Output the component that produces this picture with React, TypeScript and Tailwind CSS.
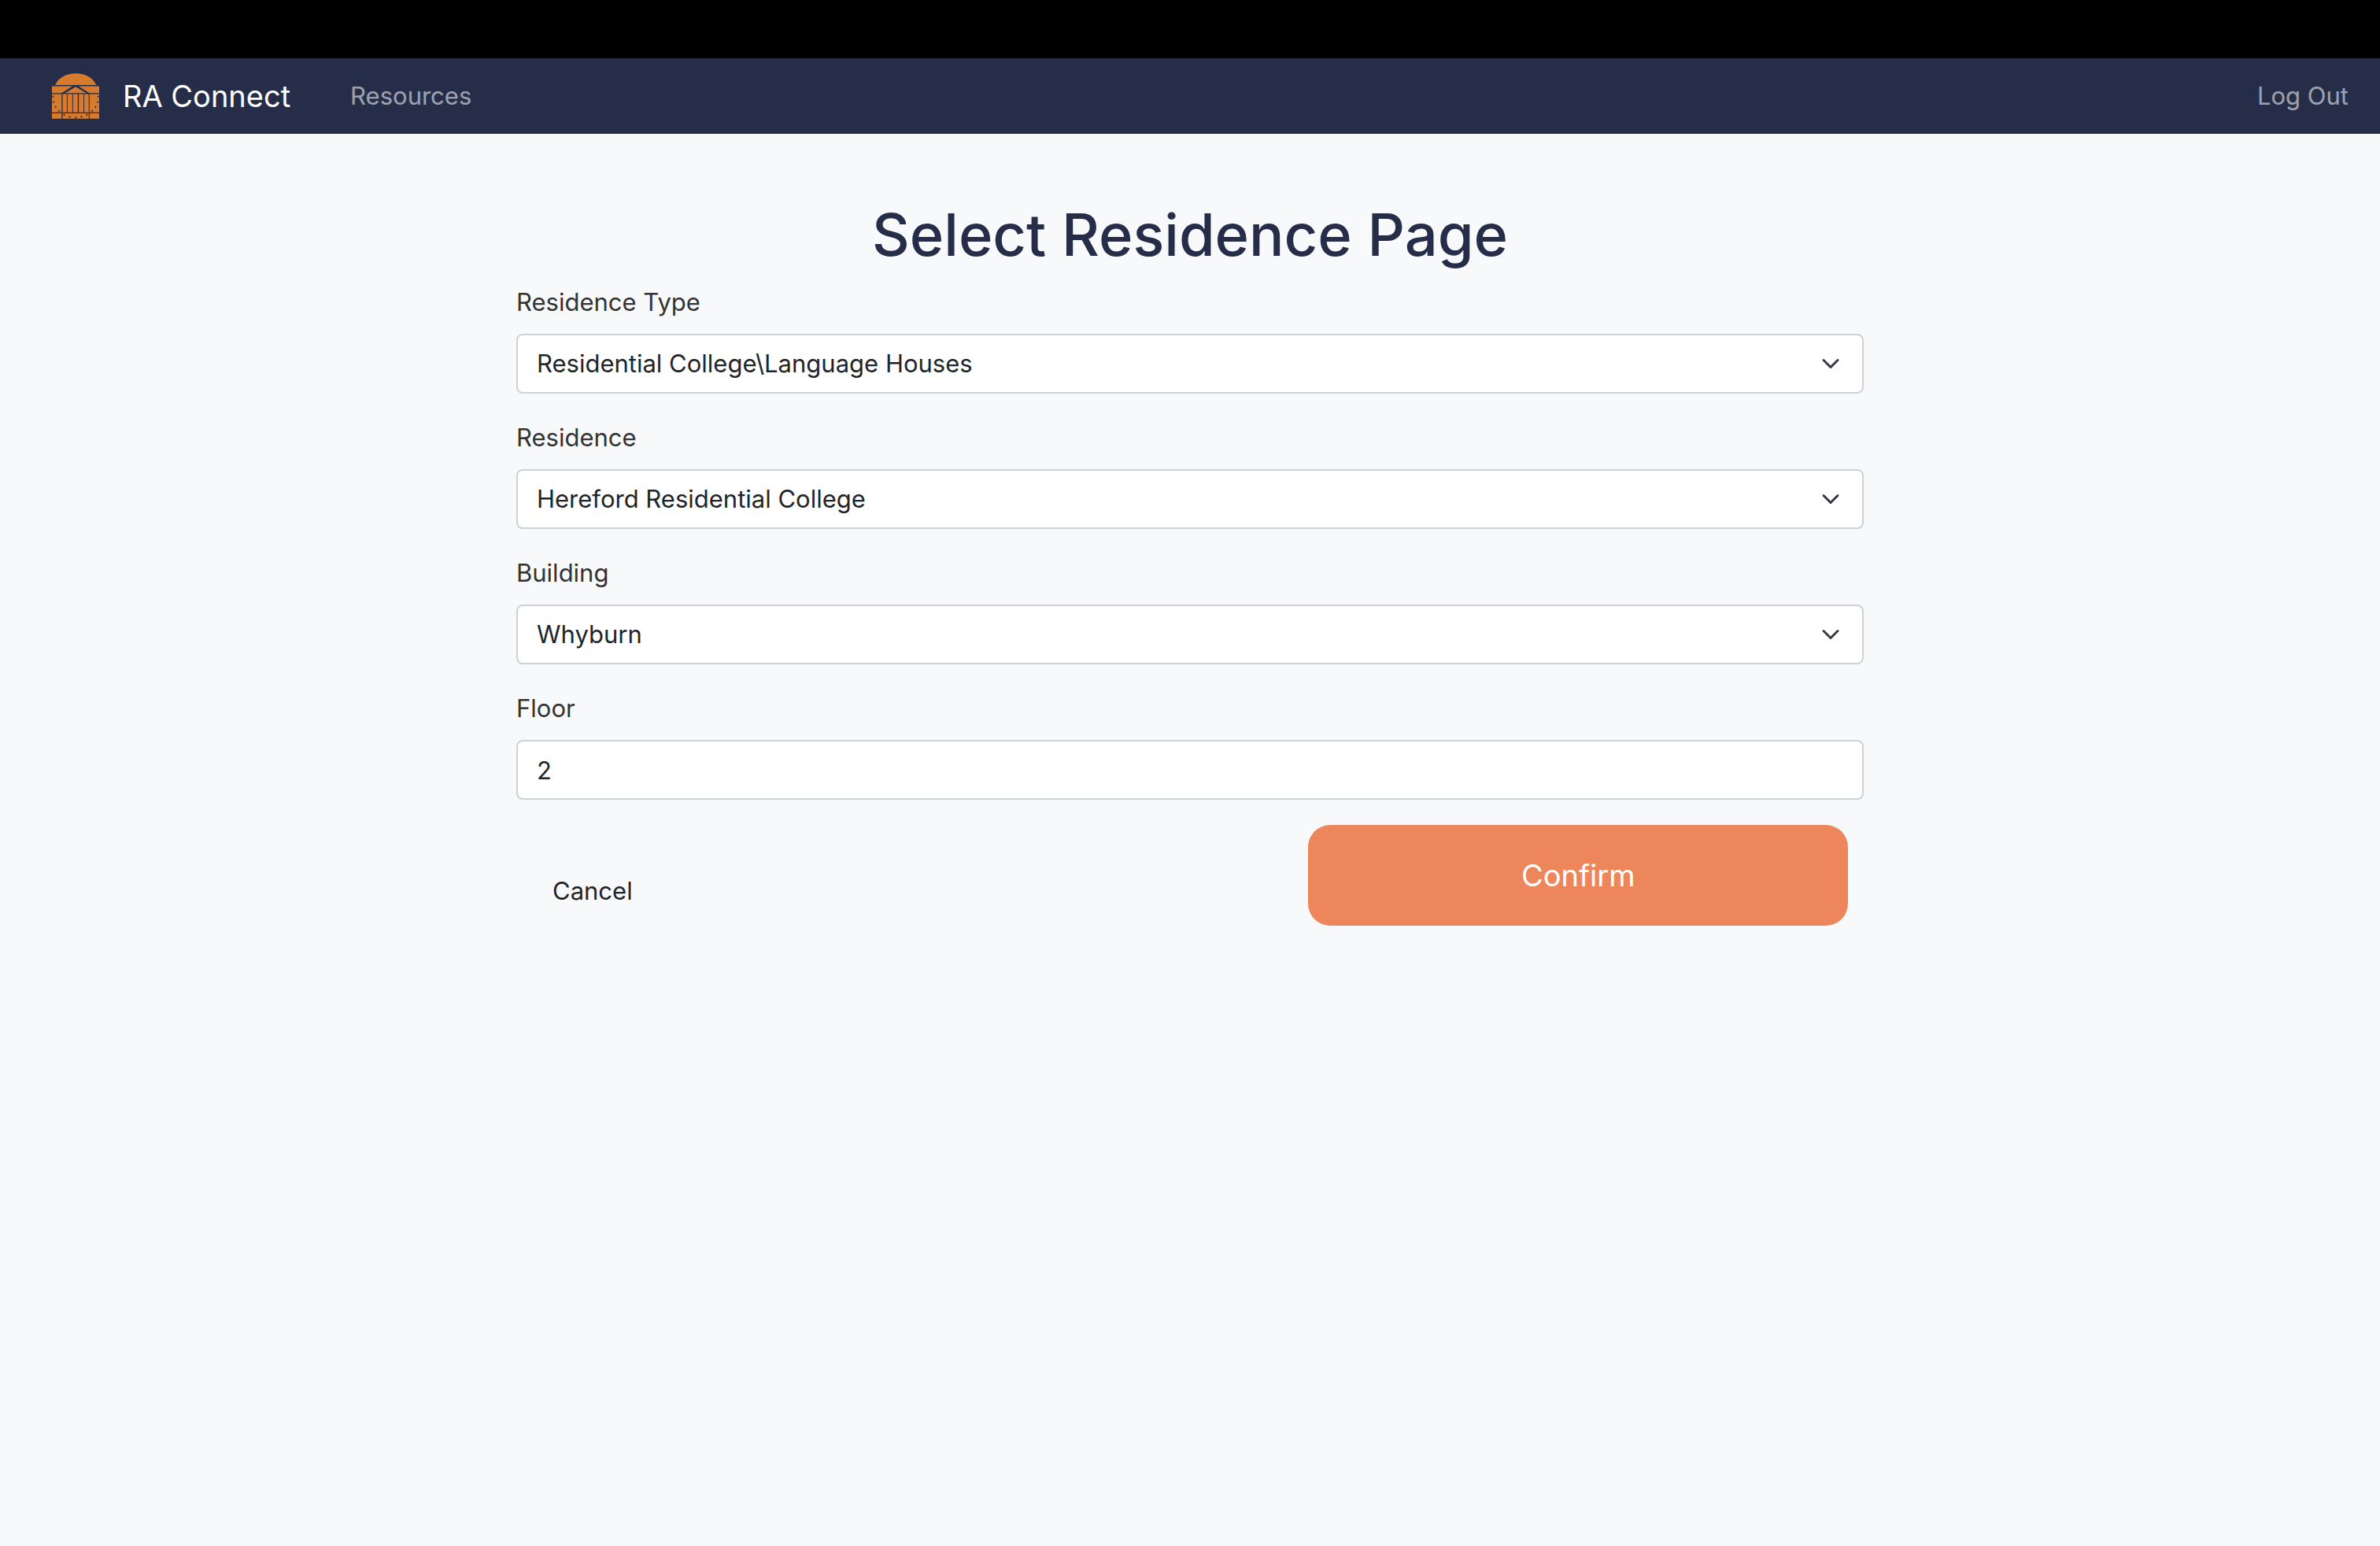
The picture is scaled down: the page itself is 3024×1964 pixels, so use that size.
import { useState } from "react";

type SelectFieldProps = { id: string; label: string; options: string[] };

const stars: [number, number][] = [
  [51, 157], [53, 178], [61, 197], [74, 213], [94, 227], [115, 235], [138, 238],
  [160, 235], [181, 227], [201, 213], [214, 197], [223, 178], [225, 157],
];

function RotundaLogo() {
  return (
    <svg viewBox="47 68 181 175" className="h-[58px] w-[60px] shrink-0" aria-hidden="true">
      <g fill="#d67b2e">
        <path d="M59 113C73 84 103 69 138 69s65 15 79 44z" />
        <path d="M47 118h79L84 144H47zM149 118h79v26h-37z" />
        <path d="M138 120l41 24H97z" />
        <path d="M47 148h37v70H47zM191 148h37v70h-37z" />
        <path d="M88 148h16v70H88zM107 148h18v70h-18zM128 148h18v70h-18zM150 148h18v70h-18zM171 148h17v70h-17z" />
        <path d="M47 222h37v20H47zM88 222h100v20H88zM191 222h37v20h-37z" />
      </g>
      <g fill="#262d49">
        {stars.map(([x, y]) => (
          <path
            key={`${x}-${y}`}
            transform={`translate(${x} ${y})`}
            d="M0-5L1.4-1.6 5-1.5 2.2.8 3.2 4.4 0 2.4-3.2 4.4-2.2.8-5-1.5-1.4-1.6z"
          />
        ))}
      </g>
    </svg>
  );
}

function Chevron() {
  return (
    <svg
      viewBox="0 0 16 16"
      className="pointer-events-none absolute inset-y-0 right-[30px] my-auto size-6"
      fill="none"
      stroke="#343a40"
      strokeWidth="2"
      strokeLinecap="round"
      strokeLinejoin="round"
      aria-hidden="true"
    >
      <path d="m2 5 6 6 6-6" />
    </svg>
  );
}

function SelectField({ id, label, options }: SelectFieldProps) {
  const [value, setValue] = useState(options[0]);
  return (
    <div className="flex flex-col gap-4">
      <label htmlFor={id} className="text-[#333333]">{label}</label>
      <div className="relative">
        <select
          id={id}
          value={value}
          onChange={(e) => setValue(e.target.value)}
          className="block h-[76px] w-full appearance-none rounded-lg border-2 border-[#ced2d6] bg-white pr-18 pl-6 text-[#212529]"
        >
          {options.map((o) => (
            <option key={o}>{o}</option>
          ))}
        </select>
        <Chevron />
      </div>
    </div>
  );
}

export default function App() {
  const [floor, setFloor] = useState("2");
  return (
    <div className="min-h-screen bg-[#f8f9fb] font-['Inter',sans-serif] text-[31px] leading-[48px] text-[#212529]">
      <div className="h-[74px] bg-black" />
      <nav className="flex h-24 items-center bg-[#262d49] pr-10 pl-[66px]">
        <a href="#" className="flex items-center gap-[30px] text-[38px] text-white">
          <RotundaLogo />
          RA Connect
        </a>
        <a href="#resources" className="ml-19 text-white/55">Resources</a>
        <a href="#logout" className="ml-auto text-white/55">Log Out</a>
      </nav>

      <main className="mx-auto w-full max-w-[1712px] pt-20">
        <h1 className="mb-[14px] text-center text-[74px] leading-24 font-medium text-[#262d49]">
          Select Residence Page
        </h1>
        <form className="flex flex-col gap-8" onSubmit={(e) => e.preventDefault()}>
          <SelectField id="type" label="Residence Type" options={["Residential College\\Language Houses"]} />
          <SelectField id="residence" label="Residence" options={["Hereford Residential College"]} />
          <SelectField id="building" label="Building" options={["Whyburn"]} />
          <div className="flex flex-col gap-4">
            <label htmlFor="floor" className="text-[#333333]">Floor</label>
            <input
              id="floor"
              type="text"
              value={floor}
              onChange={(e) => setFloor(e.target.value)}
              className="block h-[76px] w-full rounded-lg border-2 border-[#ced2d6] bg-white px-6 text-[#212529]"
            />
          </div>
          <div className="flex items-end justify-between px-5">
            <button type="button" className="mb-1.5 h-[76px] border-2 border-transparent px-6">Cancel</button>
            <button type="submit" className="h-32 w-[41%] rounded-[28px] bg-[#ee865c] text-[38px] text-white">
              Confirm
            </button>
          </div>
        </form>
      </main>
    </div>
  );
}
